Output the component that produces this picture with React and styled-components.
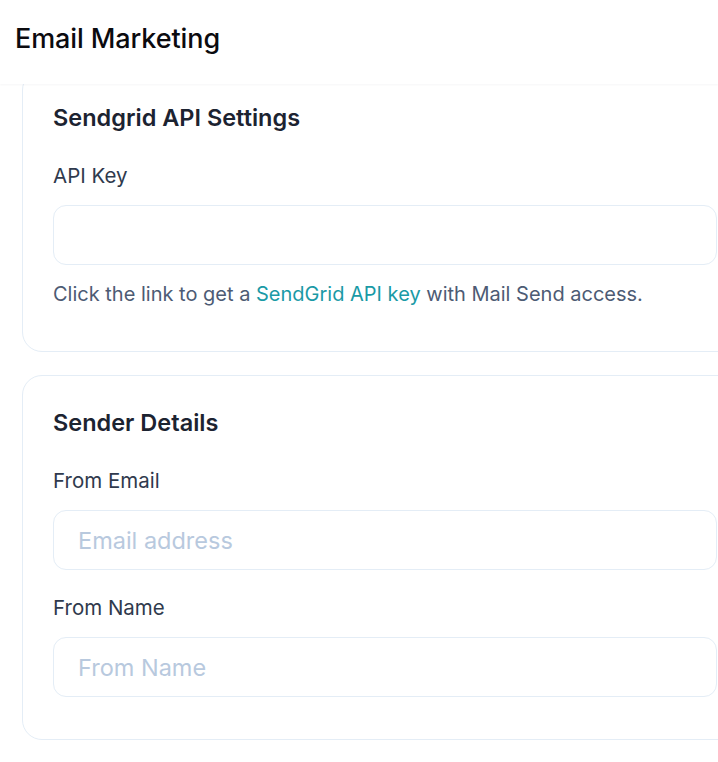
import React from "react";
import styled, { createGlobalStyle } from "styled-components";

const GlobalStyle = createGlobalStyle`
  * {
    box-sizing: border-box;
  }
  body {
    margin: 0;
    background: #ffffff;
    font-family: Inter, "Noto Sans", sans-serif;
    overflow: hidden;
  }
`;

const Page = styled.div`
  width: 718px;
  height: 762px;
  overflow: hidden;
  background: #ffffff;
`;

const TopBar = styled.header`
  position: relative;
  z-index: 2;
  height: 84px;
  display: flex;
  align-items: center;
  padding: 0 15px 8px;
  background: #ffffff;
  box-shadow: 0 1px 2px rgba(15, 23, 42, 0.04);
`;

const PageTitle = styled.h1`
  margin: 0;
  font-size: 27px;
  font-weight: 450;
  color: #0b0b0f;
  letter-spacing: -0.1px;
`;

const Content = styled.main`
  margin-top: -14px;
  padding-left: 22px;
  display: flex;
  flex-direction: column;
  gap: 23px;
`;

const Card = styled.section`
  width: 726px;
  border: 1px solid #e4edf6;
  border-radius: 20px;
  padding: 32px 30px ${(p) => (p.$end === "help" ? "43px" : "42px")};
  background: #ffffff;
`;

const CardTitle = styled.h2`
  margin: 0 0 29px;
  font-size: 23.5px;
  line-height: 30px;
  font-weight: 600;
  color: #1c2331;
`;

const Field = styled.div`
  display: flex;
  flex-direction: column;
  gap: 15px;
  & + & {
    margin-top: 24px;
  }
`;

const Label = styled.label`
  font-size: 20.5px;
  line-height: 28px;
  color: #2f3a4d;
`;

const Input = styled.input`
  height: 60px;
  width: 100%;
  border: 1px solid #e4edf6;
  border-radius: 13px;
  padding: 0 24px;
  font-family: inherit;
  font-size: 23.5px;
  color: #1c2331;
  background: #ffffff;
  outline: none;
  &::placeholder {
    color: #b8c9de;
  }
`;

const Help = styled.p`
  margin: 15px 0 0;
  font-size: 20px;
  line-height: 28px;
  color: #4d5b74;
`;

const Link = styled.a`
  color: #1a9aa6;
  text-decoration: none;
`;

export default function App() {
  return (
    <Page>
      <GlobalStyle />
      <TopBar>
        <PageTitle>Email Marketing</PageTitle>
      </TopBar>
      <Content>
        <Card $end="help">
          <CardTitle>Sendgrid API Settings</CardTitle>
          <Field>
            <Label>API Key</Label>
            <Input type="text" />
          </Field>
          <Help>
            Click the link to get a <Link href="#">SendGrid API key</Link> with
            Mail Send access.
          </Help>
        </Card>
        <Card>
          <CardTitle>Sender Details</CardTitle>
          <Field>
            <Label>From Email</Label>
            <Input type="email" placeholder="Email address" />
          </Field>
          <Field>
            <Label>From Name</Label>
            <Input type="text" placeholder="From Name" />
          </Field>
        </Card>
      </Content>
    </Page>
  );
}
